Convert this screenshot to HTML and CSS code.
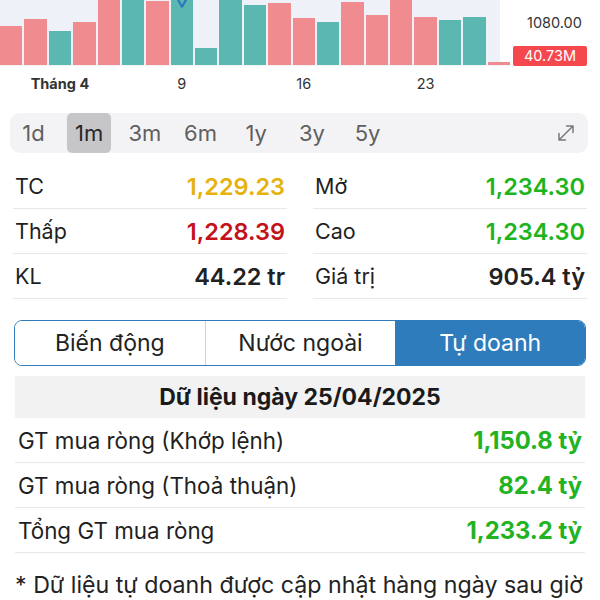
FILE: index.html
```html
<!DOCTYPE html>
<html lang="vi">
<head>
<meta charset="utf-8">
<link rel="stylesheet" href="styles.css">
</head>
<body>
<div class="page">
  <div class="chart">
    <div class="plot">
      <div class="bars">
        <div class="bar dn" style="height:39px"></div>
        <div class="bar dn" style="height:46px"></div>
        <div class="bar up" style="height:34px"></div>
        <div class="bar dn" style="height:43px"></div>
        <div class="bar dn" style="height:66px"></div>
        <div class="bar up" style="height:66px"></div>
        <div class="bar dn" style="height:64px"></div>
        <div class="bar up" style="height:66px"></div>
        <div class="bar up" style="height:17px"></div>
        <div class="bar up" style="height:66px"></div>
        <div class="bar up" style="height:60px"></div>
        <div class="bar dn" style="height:62px"></div>
        <div class="bar dn" style="height:47px"></div>
        <div class="bar up" style="height:43px"></div>
        <div class="bar dn" style="height:63px"></div>
        <div class="bar dn" style="height:50px"></div>
        <div class="bar dn" style="height:66px"></div>
        <div class="bar dn" style="height:48px"></div>
        <div class="bar up" style="height:45px"></div>
        <div class="bar up" style="height:48px"></div>
        <div class="bar dn" style="height:3px"></div>
      </div>
      <svg class="marker" width="10" height="8" viewBox="0 0 10 8"><path d="M1.2 0 L4.4 6 Q5 7.2 5.6 6 L8.8 0" fill="none" stroke="#2b78bd" stroke-width="2.2" stroke-linecap="round" stroke-linejoin="round"/></svg>
    </div>
    <div class="axis">
      <span class="tick">1080.00</span>
      <span class="vol">40.73M</span>
    </div>
  </div>
  <div class="xlabels">
    <span class="xl x-apr strong">Tháng 4</span>
    <span class="xl x-9">9</span>
    <span class="xl x-16">16</span>
    <span class="xl x-23">23</span>
  </div>

  <div class="ranges">
    <span class="range">1d</span>
    <span class="range active">1m</span>
    <span class="range">3m</span>
    <span class="range">6m</span>
    <span class="range">1y</span>
    <span class="range">3y</span>
    <span class="range">5y</span>
    <svg class="expand" width="20" height="20" viewBox="0 0 20 20"><path d="M3 17 L17 3 M10.5 3 H17 V9.5 M3 10.5 V17 H9.5" fill="none" stroke="#7a7a7a" stroke-width="1.5" stroke-linecap="round" stroke-linejoin="round"/></svg>
  </div>

  <div class="stats">
    <div class="stat"><span class="lbl">TC</span><span class="val ref">1,229.23</span></div>
    <div class="stat"><span class="lbl">Mở</span><span class="val up">1,234.30</span></div>
    <div class="stat"><span class="lbl">Thấp</span><span class="val down">1,228.39</span></div>
    <div class="stat"><span class="lbl">Cao</span><span class="val up">1,234.30</span></div>
    <div class="stat"><span class="lbl">KL</span><span class="val plain">44.22 tr</span></div>
    <div class="stat"><span class="lbl">Giá trị</span><span class="val plain">905.4 tỷ</span></div>
  </div>

  <div class="tabs">
    <div class="tab">Biến động</div>
    <div class="tab">Nước ngoài</div>
    <div class="tab active">Tự doanh</div>
  </div>

  <div class="datehead">Dữ liệu ngày 25/04/2025</div>
  <div class="rows">
    <div class="row"><span class="rlbl">GT mua ròng (Khớp lệnh)</span><span class="rval">1,150.8 tỷ</span></div>
    <div class="row"><span class="rlbl">GT mua ròng (Thoả thuận)</span><span class="rval">82.4 tỷ</span></div>
    <div class="row"><span class="rlbl">Tổng GT mua ròng</span><span class="rval">1,233.2 tỷ</span></div>
  </div>
  <p class="note">* Dữ liệu tự doanh được cập nhật hàng ngày sau giờ</p>
</div>
</body>
</html>
```
FILE: styles.css
```css
html, body {
  margin: 0;
  padding: 0;
  background: #ffffff;
}
body {
  font-family: "Inter", "Noto Sans", sans-serif;
  color: #1f1f1f;
}
.page {
  width: 600px;
  height: 600px;
  overflow: hidden;
}

/* chart */
.chart {
  display: flex;
  height: 66px;
}
.plot {
  position: relative;
  width: 510px;
  height: 66px;
  overflow: hidden;
  background: linear-gradient(to right, #eef2f8 0, #eef2f8 500px, #ffffff 500px);
}
.bars {
  display: flex;
  align-items: flex-end;
  gap: 2px;
  height: 65px;
  border-bottom: 1px solid #f4f4f4;
}
.bar {
  flex: 1;
}
.bar.dn { background: #f08b8f; }
.bar.up { background: #5bb8b0; }
.marker {
  position: absolute;
  left: 177px;
  top: 0;
}
.axis {
  flex: 1;
  display: flex;
  flex-direction: column;
  align-items: flex-start;
  padding-left: 3px;
}
.tick {
  margin-top: 14px;
  margin-left: 14px;
  font-size: 14.5px;
  line-height: 18px;
  color: #333;
}
.vol {
  margin-top: 14px;
  width: 74px;
  height: 20px;
  line-height: 20px;
  text-align: center;
  font-size: 14.5px;
  color: #fff;
  background: #f4474e;
  border-radius: 2px;
}
.xlabels {
  display: grid;
  grid-template-columns: repeat(21, 1fr);
  column-gap: 2px;
  width: 510px;
  height: 36px;
  line-height: 36px;
  font-size: 14.5px;
  color: #333;
}
.xl { text-align: center; white-space: nowrap; }
.strong { font-weight: 700; }
.x-apr { grid-column: 2 / 5; }
.x-9 { grid-column: 7 / 10; }
.x-16 { grid-column: 12 / 15; }
.x-23 { grid-column: 17 / 20; }

/* range selector */
.ranges {
  display: flex;
  align-items: center;
  gap: 11.7px;
  margin: 11px 12px 0 10px;
  padding-left: 1.5px;
  height: 40px;
  background: #f3f3f5;
  border-radius: 10px;
}
.range {
  width: 44px;
  height: 40px;
  line-height: 40px;
  text-align: center;
  font-size: 22px;
  color: #5f5f5f;
  border-radius: 5px;
}
.range.active {
  background: #c6c6c8;
  color: #262626;
}
.expand {
  margin-left: auto;
  margin-right: 12px;
}

/* stats */
.stats {
  display: grid;
  grid-template-columns: 1fr 1fr;
  column-gap: 26px;
  margin: 11px 13px 0 13px;
}
.stat {
  display: flex;
  justify-content: space-between;
  align-items: center;
  height: 44px;
  padding: 0 2px;
  border-bottom: 1px solid #e8e8e8;
  font-size: 21.5px;
}
.lbl { color: #1f1f1f; }
.val { font-weight: 600; font-size: 23.5px; }
.val.ref { color: #e5b20e; }
.val.up { color: #1db41d; }
.val.down { color: #c4121b; }
.val.plain { color: #222; }

/* tabs */
.tabs {
  display: flex;
  margin: 21px 14px 0 14px;
  height: 46px;
  border: 1.5px solid #2f7cbd;
  border-radius: 8px;
  overflow: hidden;
  box-sizing: border-box;
}
.tab {
  flex: 1;
  display: flex;
  align-items: center;
  justify-content: center;
  font-size: 23px;
  color: #222;
  background: #fff;
  border-left: 1px solid #d2d2d2;
}
.tab:first-child { border-left: none; }
.tab.active {
  background: #2f7cbd;
  color: #fff;
  border-left: none;
}

/* date table */
.datehead {
  margin: 10px 15px 0 15px;
  height: 42px;
  line-height: 42px;
  text-align: center;
  background: #f2f2f2;
  font-size: 23px;
  font-weight: 700;
  color: #1a1a1a;
}
.rows {
  margin: 0 15px;
}
.row {
  display: flex;
  justify-content: space-between;
  align-items: center;
  height: 44px;
  padding: 0 3px 0 3px;
  border-bottom: 1px solid #e8e8e8;
  font-size: 22.4px;
}
.rval {
  font-weight: 700;
  font-size: 23.8px;
  color: #22b322;
}
.note {
  margin: 17px 15px 0 15px;
  font-size: 23.2px;
  line-height: 30px;
  color: #222;
  white-space: nowrap;
}
```
